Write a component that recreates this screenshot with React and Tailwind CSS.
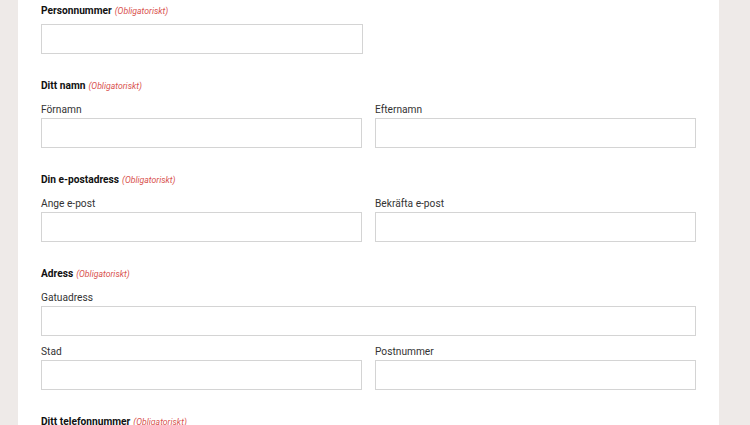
import React from "react";

const Req = () => (
  <span className="ml-[3px] text-[8.7px] leading-none italic font-normal text-[#d9534f]">(Obligatoriskt)</span>
);

const Heading = ({ children, className = "" }) => (
  <div className={"h-[16px] text-[10.2px] leading-[18px] font-bold text-[#111] " + className}>
    {children}
    <Req />
  </div>
);

const Field = ({ label }) => (
  <div className="flex flex-col">
    <label className="h-[16px] text-[10.2px] leading-[18px] text-[#333] mb-[1px]">{label}</label>
    <div className="h-[30px] border border-[#d4d4d4] bg-white" />
  </div>
);

export default function App() {
  return (
    <div className="h-[425px] w-[750px] overflow-hidden bg-[#eeeae8]" style={{ fontFamily: "Roboto, 'Liberation Sans', sans-serif" }}>
      <div className="ml-[18px] w-[701px] h-full bg-white px-[23px] pt-[2px]">
        <Heading className="mb-[6px]">Personnummer</Heading>
        <div className="w-[322px] h-[30px] border border-[#d4d4d4]" />

        <div className="mt-[23px]">
          <Heading className="mb-[8px]">Ditt namn</Heading>
          <div className="grid grid-cols-2 gap-x-[13px]">
            <Field label="Förnamn" />
            <Field label="Efternamn" />
          </div>
        </div>

        <div className="mt-[23px]">
          <Heading className="mb-[8px]">Din e-postadress</Heading>
          <div className="grid grid-cols-2 gap-x-[13px]">
            <Field label="Ange e-post" />
            <Field label="Bekräfta e-post" />
          </div>
        </div>

        <div className="mt-[23px]">
          <Heading className="mb-[8px]">Adress</Heading>
          <div className="grid grid-cols-2 gap-x-[13px] gap-y-[7px]">
            <div className="col-span-2">
              <Field label="Gatuadress" />
            </div>
            <Field label="Stad" />
            <Field label="Postnummer" />
          </div>
        </div>

        <div className="mt-[23px]">
          <Heading className="mb-[8px]">Ditt telefonnummer</Heading>
        </div>
      </div>
    </div>
  );
}
